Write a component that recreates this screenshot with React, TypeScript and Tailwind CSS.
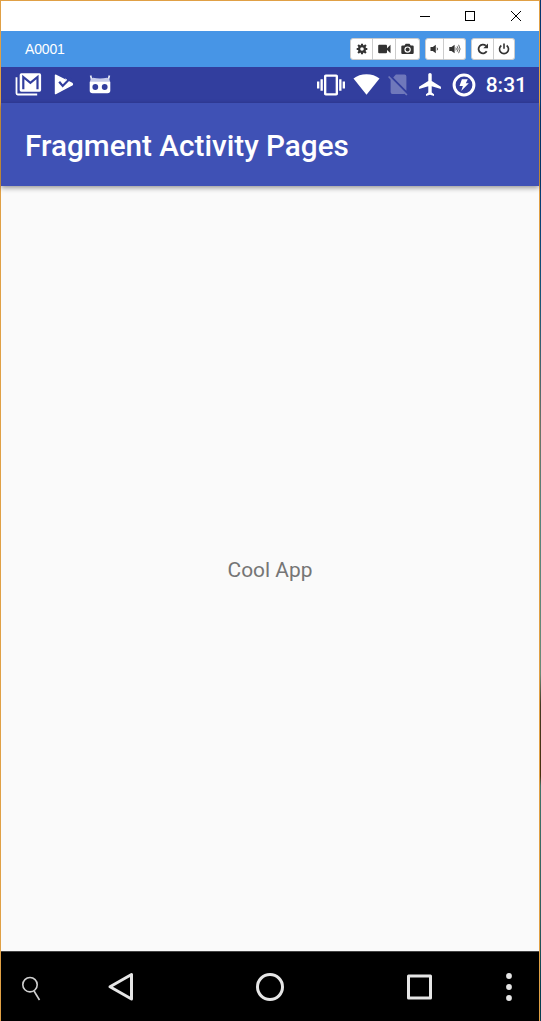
import React from "react";

type IconProps = { className?: string };

function ToolButton({ className, children }: { className: string; children: React.ReactNode }) {
  return (
    <button className={`flex h-[22px] items-center justify-center border-[#ccc] bg-white text-[#333] ${className}`}>
      {children}
    </button>
  );
}

const Gear = () => (
  <svg width="12" height="12" viewBox="0 0 12 12">
    <circle cx="6" cy="6" r="2.9" fill="none" stroke="currentColor" strokeWidth="2.2" />
    <g stroke="currentColor" strokeWidth="2.1">
      <path d="M6 .7v2M6 9.3v2M.7 6h2M9.3 6h2M2.1 2.1l1.5 1.5M8.4 8.4l1.5 1.5M2.1 9.900l1.500-1.500M8.400 3.600l1.500-1.500" />
    </g>
  </svg>
);
const Video = () => (
  <svg width="13" height="10" viewBox="0 0 13 10" fill="currentColor">
    <rect x=".2" y=".8" width="8.800" height="8.400" rx="1" />
    <path d="M8.800 4.500 12.500.8v8.400L8.800 5.700z" />
  </svg>
);
const Camera = () => (
  <svg width="13" height="12" viewBox="0 0 13 12">
    <path fill="currentColor" fillRule="evenodd" d="M1.5 2.4h2L4.700.7h3.800l1.200 1.700h1.800q1.200 0 1.200 1.200v6.200q0 1.200-1.200 1.200h-10Q.3 11 .3 9.800V3.600q0-1.200 1.200-1.200zM6.600 3.400a3.200 3.200 0 1 0 0 6.400 3.200 3.200 0 0 0 0-6.400z" />
    <circle cx="6.600" cy="6.600" r="2" fill="currentColor" />
  </svg>
);
const VolumeLow = () => (
  <svg width="9" height="10" viewBox="0 0 9 10">
    <path fill="currentColor" d="M.5 3h2.300L5.800.8v8.400L2.800 7H.5z" />
    <path d="M7 3.700q1 1.300 0 2.600" fill="none" stroke="currentColor" strokeWidth=".9" />
  </svg>
);
const VolumeHigh = () => (
  <svg width="12" height="10" viewBox="0 0 12 10">
    <path fill="currentColor" d="M.3 3h2.200L5.600.8v8.400L2.500 7H.3z" />
    <path d="M6.800 3.600q1 1.400 0 2.800M8.200 2.300q1.900 2.700 0 5.400M9.600.8q3 4.200 0 8.400" fill="none" stroke="currentColor" strokeWidth=".75" />
  </svg>
);
const Repeat = () => (
  <svg width="12" height="12" viewBox="0 0 12 12">
    <path d="M9.700 8.300A4.400 4.400 0 1 1 8.900 2.700" fill="none" stroke="currentColor" strokeWidth="1.800" />
    <path fill="currentColor" d="M11 .6v4.700H6.300z" />
  </svg>
);
const Power = () => (
  <svg width="12" height="12" viewBox="0 0 12 12" fill="none" stroke="currentColor" strokeWidth="1.600">
    <path d="M3.300 2.500a4.500 4.500 0 1 0 5.400 0M6 .4v5.400" />
  </svg>
);

const Mail = ({ className }: IconProps) => (
  <svg className={className} width="27" height="23" viewBox="0 0 27 23">
    <path d="M1.500 4.300v16q0 1.200 1.200 1.200h19.500" fill="none" stroke="white" strokeWidth="1.800" />
    <rect x="4.700" y=".3" width="21.400" height="18.400" rx="1.600" fill="white" />
    <path d="M8.300 16.300V4l7.100 5.800L22.500 4v12.300" fill="none" stroke="#323e9e" strokeWidth="2.200" />
  </svg>
);
const PlayCheck = ({ className }: IconProps) => (
  <svg className={className} width="20" height="21" viewBox="0 0 20 21">
    <path d="M1.500 1.200 18 9.500q.8.700 0 1.400L1.500 19.600z" fill="white" stroke="white" strokeWidth="1.400" strokeLinejoin="round" />
    <path d="m5.200 7.700 3.500 4.200 8-8.200" fill="none" stroke="#323e9e" strokeWidth="2.200" />
    <path d="m11.200 4.900 1.700.9" stroke="white" strokeWidth=".8" />
  </svg>
);
const Robot = ({ className }: IconProps) => (
  <svg className={className} width="22" height="20" viewBox="0 0 22 20">
    <path d="M1.600.5 2.800 5M20.400.5 19.200 5" stroke="#e8eaf6" strokeWidth="1.700" />
    <path d="M1 7Q1.200 3.600 4 2.800q7 1.400 14 0 2.800.8 3 4.200z" fill="#c5cae9" />
    <path fill="white" fillRule="evenodd" d="M.7 6.700h20.600v8.800q0 2.800-2.800 2.800h-15q-2.800 0-2.800-2.800zM6.300 9.100a2.900 2.900 0 1 0 0 5.800 2.900 2.900 0 0 0 0-5.800zm9.400 0a2.900 2.900 0 1 0 0 5.800 2.900 2.900 0 0 0 0-5.800z" />
  </svg>
);
const Vibration = () => (
  <svg width="28" height="28" viewBox="0 0 24 24" fill="white" className="shrink-0">
    <path d="M0 15h2V9H0v6zm3 2h2V7H3v10zm19-8v6h2V9h-2zm-3 8h2V7h-2v10zM16.500 3h-9C6.670 3 6 3.670 6 4.500v15c0 .83.67 1.500 1.500 1.500h9c.83 0 1.500-.67 1.500-1.500v-15c0-.83-.67-1.500-1.500-1.500zM16 19H8V5h8v14z" />
  </svg>
);
const Wifi = () => (
  <svg width="27" height="21" viewBox="0 0 27 21" className="shrink-0">
    <path fill="white" d="M13.500 20.800.5 4.600C4 1.800 8.500.3 13.500.3s9.500 1.500 13 4.300z" />
  </svg>
);
const NoSim = () => (
  <svg width="20" height="22" viewBox="0 0 20 22" fill="white" fillOpacity=".3" className="shrink-0">
    <path d="M7.900.6h8.600q1.900 0 1.900 1.900v14.200L5.200 3.500zM1.200 1.900l18.300 18.500-1.200 1.200-1.900-1.900q-.5.300-1 .3H4.500q-1.900 0-1.900-1.900V5.700L0 3.100z" />
  </svg>
);
const Plane = () => (
  <svg width="22" height="23" viewBox="2 2 19 20" fill="white" className="shrink-0">
    <path d="M21 16v-2l-8-5V3.500c0-.83-.67-1.500-1.500-1.500S10 2.670 10 3.500V9l-8 5v2l8-2.500V19l-2 1.500V22l3.500-1 3.500 1v-1.500L13 19v-5.500l8 2.500z" />
  </svg>
);
const BoltCircle = () => (
  <svg width="24" height="24" viewBox="0 0 24 24" className="shrink-0">
    <circle cx="12" cy="12" r="9.900" fill="none" stroke="white" strokeWidth="3" />
    <path fill="white" d="M9.900 6.200h5.900l-2 4h3L9.200 17.900l1.700-4.900H7.500z" />
  </svg>
);

export default function App() {
  return (
    <div className="flex h-[1021px] w-[541px] overflow-hidden bg-[#fafafa] font-['Roboto',sans-serif]">
      <div className="flex w-[540px] flex-col border-x border-t border-[#e0a045]">
        <header className="flex h-[30px] shrink-0 items-center bg-white pl-[418px]">
          <svg width="110" height="12" viewBox="0 0 110 12" fill="none" stroke="black" strokeWidth="1">
            <path d="M1 6.500h10" shapeRendering="crispEdges" />
            <rect x="46.500" y="1.500" width="9" height="9" shapeRendering="crispEdges" />
            <path d="m92 1 10 10M102 1 92 11" />
          </svg>
        </header>

        <div className="flex h-[36px] shrink-0 items-center bg-[#4795e6] pl-6 pr-6">
          <span className="font-['Liberation_Sans',sans-serif] text-[14px] tracking-[-0.15px] text-white">A0001</span>
          <div className="ml-auto flex gap-[5px]">
            <div className="flex">
              <ToolButton className="w-[23px] rounded-l-[3px] border"><Gear /></ToolButton>
              <ToolButton className="w-[23px] border-y border-r"><Video /></ToolButton>
              <ToolButton className="w-[24px] rounded-r-[3px] border-y border-r"><Camera /></ToolButton>
            </div>
            <div className="flex">
              <ToolButton className="w-[19px] rounded-l-[3px] border"><VolumeLow /></ToolButton>
              <ToolButton className="w-[22px] rounded-r-[3px] border-y border-r"><VolumeHigh /></ToolButton>
            </div>
            <div className="flex">
              <ToolButton className="w-[23px] rounded-l-[3px] border"><Repeat /></ToolButton>
              <ToolButton className="w-[21px] rounded-r-[3px] border-y border-r"><Power /></ToolButton>
            </div>
          </div>
        </div>

        <div className="flex h-[36px] shrink-0 items-center bg-[#323e9e] pb-px pl-[14px] pr-[12px]">
          <Mail />
          <PlayCheck className="ml-[12px]" />
          <Robot className="ml-[15px]" />
          <div className="ml-auto flex items-center">
            <Vibration />
            <span className="ml-[8px]"><Wifi /></span>
            <span className="ml-[8px]"><NoSim /></span>
            <span className="ml-[11px]"><Plane /></span>
            <span className="ml-[11px]"><BoltCircle /></span>
            <span className="ml-[10px] pt-[2px] text-[21px] font-medium leading-none text-white">8:31</span>
          </div>
        </div>

        <div className="z-10 flex h-[83px] shrink-0 items-center bg-[#3f51b5] pl-6 pt-[3px] shadow-[0_2px_5px_rgba(0,0,0,0.4)]">
          <h1 className="whitespace-nowrap text-[29.700px] font-medium leading-none text-white">Fragment Activity Pages</h1>
        </div>

        <main className="flex flex-1 items-center justify-center bg-[#fafafa] pt-[3px]">
          <p className="text-[20.900px] leading-none text-[#757575]">Cool App</p>
        </main>

        <nav className="flex h-[70px] shrink-0 items-center border-t border-[#444] bg-black pl-[20px]">
          <svg className="mt-[5px]" width="22" height="26" viewBox="0 0 22 26" fill="none" stroke="#cfcfcf" strokeWidth="1.600">
            <circle cx="9" cy="8.700" r="7.200" />
            <path d="m13 15 5.500 9" />
          </svg>
          <svg className="ml-[64px]" width="28" height="30" viewBox="0 0 28 30" fill="none" stroke="#e6e6e6" strokeWidth="3" strokeLinejoin="round">
            <path d="M24.500 2.500v24.500L3 14.700z" />
          </svg>
          <svg className="ml-[120px]" width="30" height="30" viewBox="0 0 30 30" fill="none" stroke="#e6e6e6" strokeWidth="3">
            <circle cx="15" cy="15" r="12.500" />
          </svg>
          <svg className="ml-[121px]" width="28" height="28" viewBox="0 0 28 28" fill="none" stroke="#e6e6e6" strokeWidth="3" strokeLinejoin="round">
            <rect x="2.500" y="3" width="22" height="22" />
          </svg>
          <svg className="ml-[71px]" width="8" height="30" viewBox="0 0 8 30" fill="#e6e6e6">
            <circle cx="4" cy="4" r="2.900" />
            <circle cx="4" cy="15" r="2.900" />
            <circle cx="4" cy="26" r="2.900" />
          </svg>
        </nav>
      </div>
      <div className="flex-1 bg-[linear-gradient(#06356f_0%,#063e76_20%,#175578_29%,#6c7268_42%,#55827d_50%,#6b8a78_66%,#443924_69%,#49300f_76%,#42746b_77%,#315d5e_90%,#063e50_97%)]" />
    </div>
  );
}
